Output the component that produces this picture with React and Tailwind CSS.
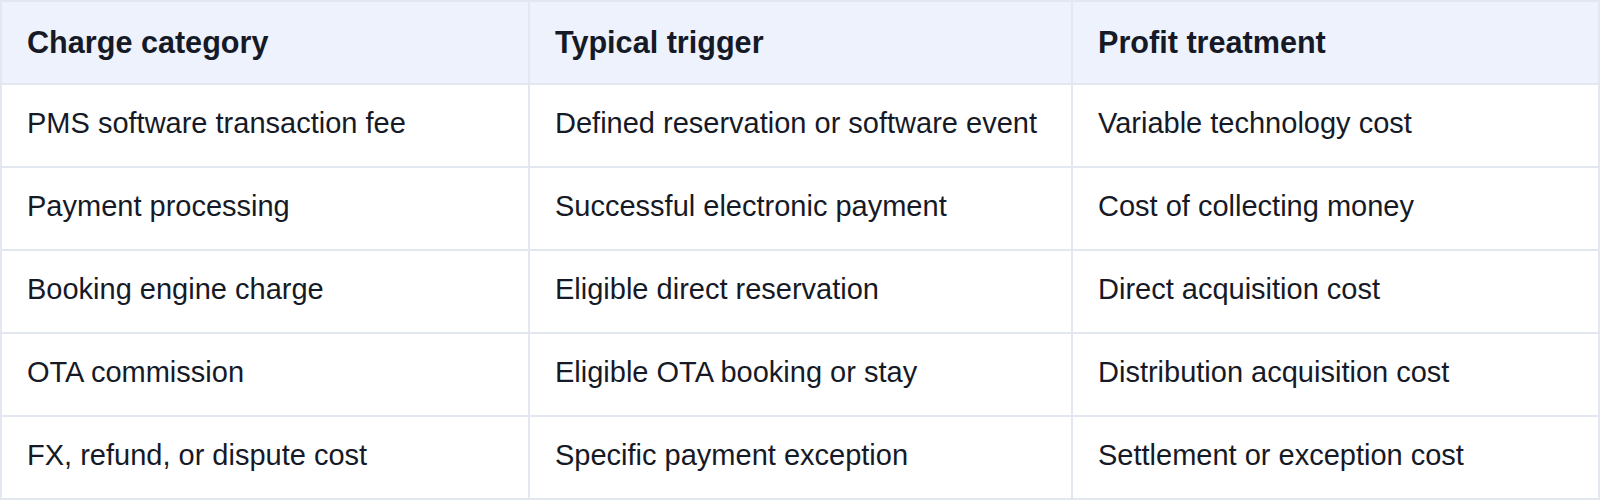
import React from "react";

const rows = [
  ["PMS software transaction fee", "Defined reservation or software event", "Variable technology cost"],
  ["Payment processing", "Successful electronic payment", "Cost of collecting money"],
  ["Booking engine charge", "Eligible direct reservation", "Direct acquisition cost"],
  ["OTA commission", "Eligible OTA booking or stay", "Distribution acquisition cost"],
  ["FX, refund, or dispute cost", "Specific payment exception", "Settlement or exception cost"],
];

export default function App() {
  return (
    <div className="w-[1600px] h-[500px] bg-white" style={{ fontFamily: '"Liberation Sans", Arial, sans-serif' }}>
      <table className="w-full border-collapse text-[#161a26] table-fixed">
        <colgroup>
          <col className="w-[528px]" />
          <col className="w-[543px]" />
          <col />
        </colgroup>
        <thead>
          <tr className="bg-[#edf2fc] h-[83px]">
            {["Charge category", "Typical trigger", "Profit treatment"].map(h => (
              <th key={h} className="border-2 border-[#e3e7f0] px-[25px] text-left text-[30.6px] font-bold">{h}</th>
            ))}
          </tr>
        </thead>
        <tbody>
          {rows.map((r, i) => (
            <tr key={i} className="h-[83px]">
              {r.map((c, j) => (
                <td key={j} className="border-2 border-[#e3e7f0] px-[25px] pb-[3px] text-[29px]">{c}</td>
              ))}
            </tr>
          ))}
        </tbody>
      </table>
    </div>
  );
}
